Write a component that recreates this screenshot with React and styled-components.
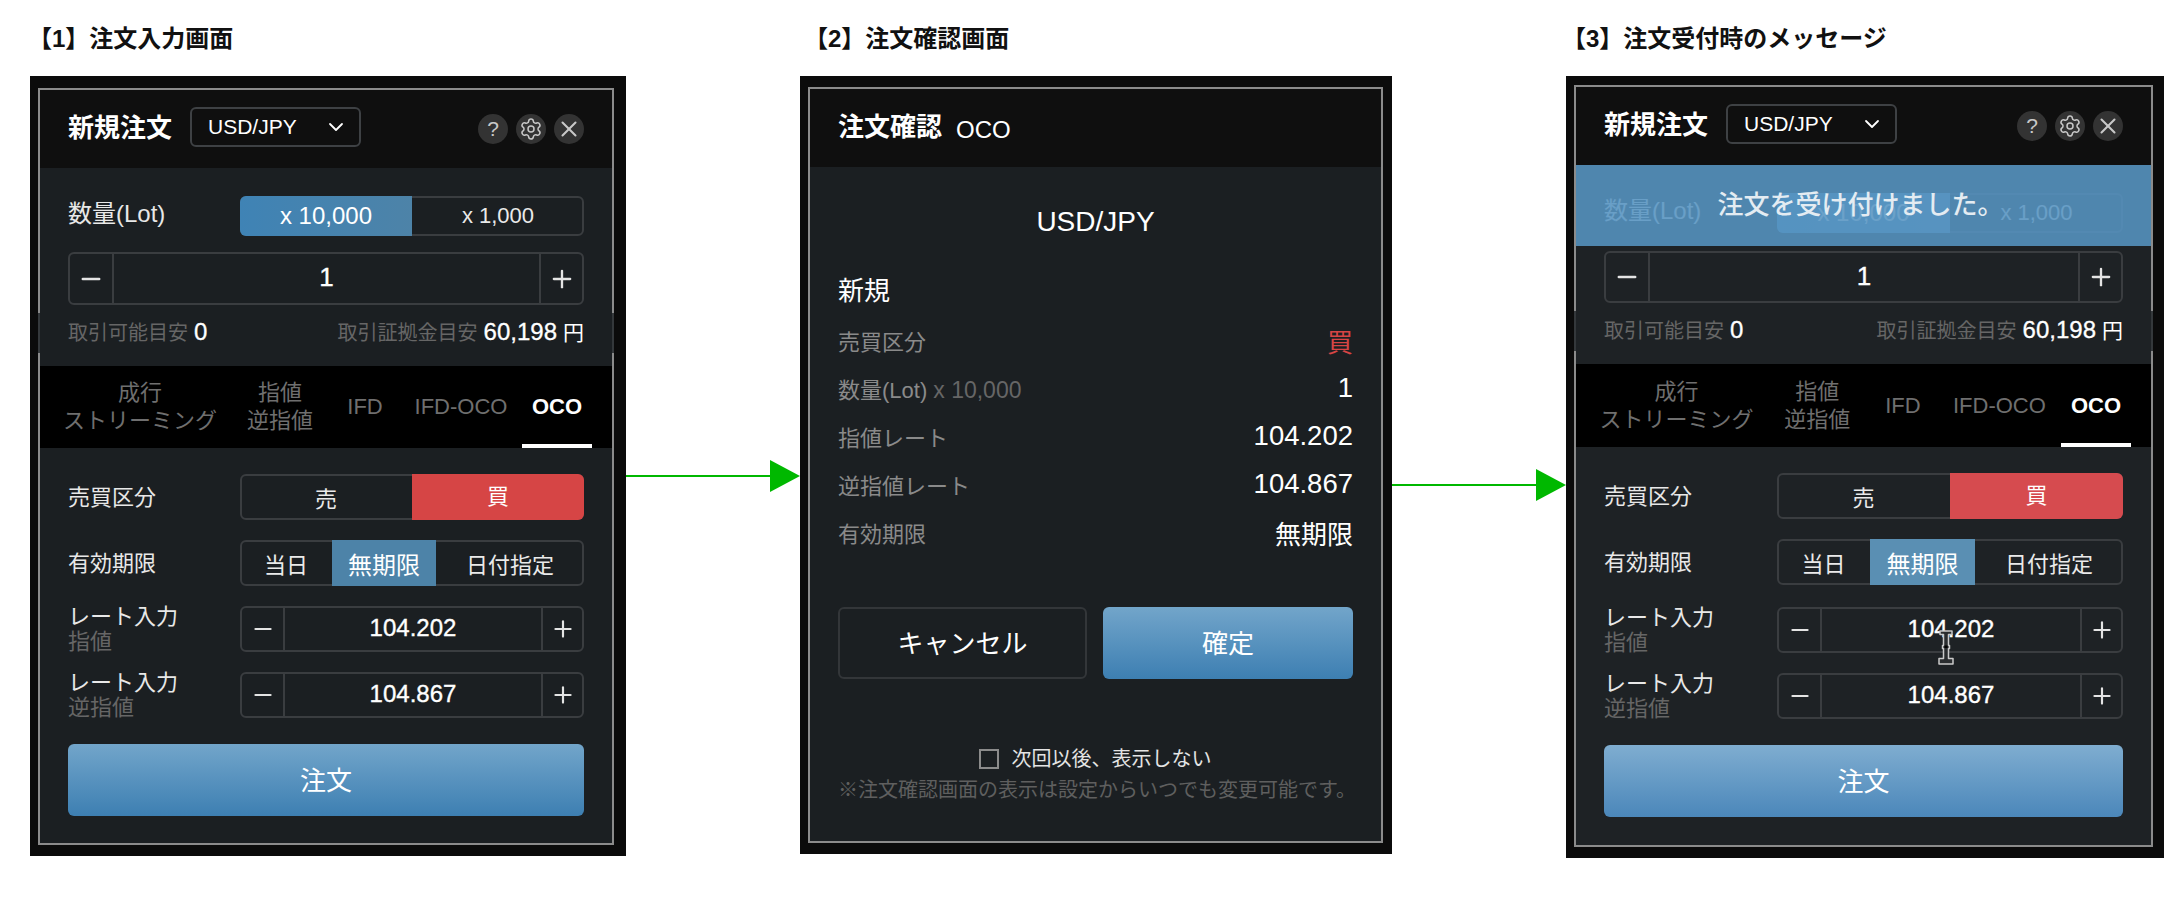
import React from "react";
import styled, { createGlobalStyle, ThemeProvider } from "styled-components";
import { ChevronDown, Minus, Plus, Settings, X } from "lucide-react";

const SANS = `"Liberation Sans", "Noto Sans CJK JP", sans-serif`;

const normal = {
  panel: "#1b1f22", red: "#d64545", blue: "#4d83a8", blueLeft: "#3f83b5",
  btnTop: "#72a5ca", btnBottom: "#3d7fb2", stepGap: 16, stepH: 53, tabsH: 82, rateShift: 0,
  labelW: 172, expiryCols: "90px 104px 1fr", tabScale: 1,
};
const afterOrder = {
  panel: "#1e2225", red: "#d64b4f", blue: "#5a8fb3", blueLeft: "#4d8ab8",
  btnTop: "#7fadd0", btnBottom: "#4b87ba", stepGap: 18, stepH: 52, tabsH: 83, rateShift: 2,
  labelW: 173, expiryCols: "91px 105px 1fr", tabScale: 1.006,
};

const GlobalStyle = createGlobalStyle`
  html, body { margin: 0; padding: 0; background: #fff; }
  body { font-family: ${SANS}; color: #fff; }
  * { box-sizing: border-box; }
`;

const Page = styled.div`
  display: flex;
  align-items: flex-start;
  width: 2184px;
  height: 913px;
  padding-left: 30px;
  overflow: hidden;
`;

const Column = styled.section`
  flex: 0 0 ${(p) => p.$w}px;
  min-width: 0;
`;

const Heading = styled.h2`
  height: 76px;
  margin: 0 0 0 ${(p) => p.$shift}px;
  padding-top: 24px;
  font-size: 24px;
  line-height: 30px;
  font-weight: 700;
  color: #111;
  white-space: nowrap;
`;

const ArrowSlot = styled.svg`
  flex: 0 0 174px;
  margin-top: ${(p) => p.$top}px;
  display: block;
`;

const Frame = styled.div`
  position: relative;
  height: ${(p) => p.$h}px;
  padding: ${(p) => p.$inset};
  background: #0b0b0b;
`;

const Inner = styled.div`
  height: 100%;
  border: 2px solid #8b8b8b;
  background: ${(p) => p.theme.panel};
  display: flex;
  flex-direction: column;
`;

const Header = styled.header`
  flex: 0 0 78px;
  display: flex;
  align-items: center;
  padding: 0 28px;
  background: #0f0f0f;
`;

const Title = styled.h1`
  margin: 0 18px 2px 0;
  font-size: 26px;
  line-height: 34px;
  font-weight: 700;
`;

const Kind = styled.span`
  margin-left: -4px;
  padding-top: 3px;
  font-size: 24px;
`;

const PairSelect = styled.div`
  width: 171px;
  height: 40px;
  margin-bottom: 4px;
  padding: 0 11px 0 16px;
  display: flex;
  align-items: center;
  justify-content: space-between;
  border: 2px solid #3e4144;
  border-radius: 6px;
  font-size: 21px;
`;

const HeadIcons = styled.div`
  margin-left: auto;
  display: flex;
  gap: 8px;
`;

const RoundIcon = styled.span`
  width: 30px;
  height: 30px;
  border-radius: 50%;
  display: flex;
  align-items: center;
  justify-content: center;
  background: #333;
  color: #c8c8c8;
  font-size: 21px;
`;

const QtySection = styled.div`
  position: relative;
  padding: 28px 28px 13px;
`;

const Row = styled.div`
  display: flex;
  align-items: center;
`;

const Label = styled.div`
  flex: 0 0 ${(p) => p.theme.labelW}px;
  font-size: 22px;
  line-height: 25px;
  color: #e8e8e8;
`;

const QtyLabel = styled(Label)`
  font-size: 24px;
  padding-bottom: 6px;
`;

const SubLabel = styled.div`
  color: #666;
`;

const Segmented = styled.div`
  flex: 1;
  height: ${(p) => p.$h}px;
  display: grid;
  grid-template-columns: ${(p) => p.$cols};
  border: 2px solid #3a3d40;
  border-radius: 6px;
`;

const ExpiryGrid = styled(Segmented)`
  grid-template-columns: ${(p) => p.theme.expiryCols};
`;

const Seg = styled.div`
  margin: -2px 0;
  padding-bottom: ${(p) => (p.$tone === "red" ? 6 : 0)}px;
  display: flex;
  align-items: center;
  justify-content: center;
  font-size: ${(p) => (p.$tone === "left" || p.$tone === "blue" ? 24 : 22)}px;
  color: ${(p) => (p.$tone ? "#fff" : "#eaeaea")};
  background: ${(p) =>
    p.$tone === "red" ? p.theme.red
    : p.$tone === "blue" ? p.theme.blue
    : p.$tone === "left" ? `linear-gradient(90deg, ${p.theme.blueLeft}, ${p.theme.blue})`
    : "transparent"};
  &:first-child { margin-left: -2px; border-radius: 6px 0 0 6px; }
  &:last-child { margin-right: -2px; border-radius: 0 6px 6px 0; }
`;

const Stepper = styled.div`
  flex: 1;
  height: 46px;
  display: grid;
  grid-template-columns: ${(p) => p.$left}px 1fr ${(p) => p.$right}px;
  border: 2px solid #3a3d40;
  border-radius: 6px;
`;

const QtyStepper = styled(Stepper)`
  height: ${(p) => p.theme.stepH}px;
`;

const StepBtn = styled.span`
  display: flex;
  align-items: center;
  justify-content: center;
  color: #e4e4e4;
`;

const StepValue = styled.span`
  display: flex;
  align-items: center;
  justify-content: center;
  padding-bottom: 2px;
  font-size: ${(p) => p.$size}px;
  -webkit-text-stroke: 0.35px #fff;
  border-left: 2px solid #3a3d40;
  border-right: 2px solid #3a3d40;
`;

const QtyStepRow = styled(Row)`
  margin-top: ${(p) => p.theme.stepGap}px;
`;

const InfoRow = styled.div`
  height: 40px;
  margin: 8px -30px 0;
  padding: 0 28px 4px;
  display: flex;
  align-items: center;
  justify-content: space-between;
  font-size: 20px;
  color: #666;
  background: ${(p) => p.theme.panel};
  border-left: 2px solid #34383b;
  border-right: 2px solid #34383b;
`;

const InfoValue = styled.span`
  margin-left: 6px;
  color: #fff;
  font-size: 24px;
  -webkit-text-stroke: 0.3px #fff;
`;

const InfoUnit = styled.span`
  margin-left: 6px;
  color: #fff;
  font-size: 21px;
`;

const Tabs = styled.nav`
  flex: 0 0 ${(p) => p.theme.tabsH}px;
  display: flex;
  padding-left: 10px;
  background: #000;
`;

const Tab = styled.div`
  flex: 0 0 ${(p) => p.$w * p.theme.tabScale}px;
  display: flex;
  align-items: center;
  justify-content: center;
  text-align: center;
  font-size: 22px;
  line-height: 28px;
  white-space: pre-line;
  color: ${(p) => (p.$active ? "#fff" : "#6f6f6f")};
  font-weight: ${(p) => (p.$active ? 700 : 400)};
  box-shadow: ${(p) => (p.$active ? "inset 0 -4px 0 #fff" : "none")};
`;

const FormSection = styled.div`
  padding: 26px 28px 0;
  display: flex;
  flex-direction: column;
  gap: 20px;
`;

const RateRow = styled(Row)`
  height: 46px;
  margin-top: ${(p) => (p.$first ? p.theme.rateShift : 0)}px;
`;

const OrderButton = styled.div`
  height: 72px;
  margin-top: 6px;
  padding-bottom: 3px;
  display: flex;
  align-items: center;
  justify-content: center;
  border-radius: 6px;
  font-size: 26px;
  color: #fff;
  background: linear-gradient(180deg, ${(p) => p.theme.btnTop}, ${(p) => p.theme.btnBottom});
`;

const Banner = styled.div`
  position: absolute;
  top: 0;
  left: 0;
  right: 0;
  height: 81px;
  padding: 0 6px 7px 0;
  display: flex;
  align-items: center;
  justify-content: center;
  font-size: 26px;
  font-weight: 500;
  color: #e4ecf2;
  background: rgba(87, 148, 193, 0.88);
`;

const CursorMark = styled.svg`
  position: absolute;
  left: 371px;
  top: 554px;
`;

const ConfirmBody = styled.div`
  padding: 39px 28px 0;
`;

const PairTitle = styled.div`
  text-align: center;
  font-size: 28px;
  line-height: 32px;
`;

const SectionName = styled.div`
  margin: 37px 0 9px;
  font-size: 26px;
  line-height: 32px;
`;

const ConfirmRow = styled.div`
  height: 48px;
  display: flex;
  align-items: center;
  justify-content: space-between;
  font-size: 22px;
  color: #8a8a8a;
`;

const Unit = styled.span`
  margin-left: 6px;
  color: #666;
  font-size: 23px;
`;

const ConfirmValue = styled.span`
  color: ${(p) => (p.$red ? "#d64545" : "#fff")};
  font-size: ${(p) => p.$size || 27.5}px;
`;

const ButtonRow = styled.div`
  margin-top: 51px;
  display: grid;
  grid-template-columns: 249px 250px;
  justify-content: space-between;
`;

const CancelButton = styled(OrderButton)`
  margin-top: 0;
  background: transparent;
  border: 2px solid #333639;
`;

const ConfirmButton = styled(OrderButton)`
  margin-top: 0;
`;

const SkipRow = styled.div`
  margin-top: 67px;
  display: flex;
  align-items: center;
  justify-content: center;
  gap: 13px;
  font-size: 20px;
  line-height: 26px;
  color: #e4e4e4;
  padding-right: 1px;
`;

const CheckBox = styled.span`
  width: 20px;
  height: 20px;
  border: 2px solid #8b8b8b;
`;

const Note = styled.div`
  margin-top: 5px;
  font-size: 20px;
  line-height: 26px;
  color: #5f5f5f;
  white-space: nowrap;
`;

const Arrow = ({ top }) => (
  <ArrowSlot $top={top} width="174" height="32" viewBox="0 0 174 32">
    <rect x="0" y="15" width="146" height="2" fill="#00b800" />
    <polygon points="144,0 174,16 144,32" fill="#00b800" />
  </ArrowSlot>
);

const PanelHead = () => (
  <Header>
    <Title>新規注文</Title>
    <PairSelect>
      USD/JPY
      <ChevronDown size={24} strokeWidth={1.8} />
    </PairSelect>
    <HeadIcons>
      <RoundIcon>?</RoundIcon>
      <RoundIcon><Settings size={24} strokeWidth={1.5} /></RoundIcon>
      <RoundIcon><X size={26} strokeWidth={1.9} /></RoundIcon>
    </HeadIcons>
  </Header>
);

const RateStepper = ({ value }) => (
  <Stepper $left={41} $right={39}>
    <StepBtn><Minus size={26} strokeWidth={2} /></StepBtn>
    <StepValue $size={24}>{value}</StepValue>
    <StepBtn><Plus size={26} strokeWidth={2} /></StepBtn>
  </Stepper>
);

const OrderPanel = ({ banner, height, inset, cursor }) => (
  <Frame $h={height} $inset={inset}>
    <Inner>
      <PanelHead />
      <QtySection>
        <Row>
          <QtyLabel>数量(Lot)</QtyLabel>
          <Segmented $h={40} $cols="1fr 1fr">
            <Seg $tone="left">x 10,000</Seg>
            <Seg>x 1,000</Seg>
          </Segmented>
        </Row>
        <QtyStepRow>
          <QtyStepper $left={42} $right={41}>
            <StepBtn><Minus size={28} strokeWidth={2.2} /></StepBtn>
            <StepValue $size={26}>1</StepValue>
            <StepBtn><Plus size={28} strokeWidth={2} /></StepBtn>
          </QtyStepper>
        </QtyStepRow>
        <InfoRow>
          <span>取引可能目安<InfoValue>0</InfoValue></span>
          <span>取引証拠金目安<InfoValue>60,198</InfoValue><InfoUnit>円</InfoUnit></span>
        </InfoRow>
        {banner && <Banner>注文を受け付けました。</Banner>}
      </QtySection>
      <Tabs>
        <Tab $w={180}>{"成行\nストリーミング"}</Tab>
        <Tab $w={100}>{"指値\n逆指値"}</Tab>
        <Tab $w={70}>IFD</Tab>
        <Tab $w={122}>IFD-OCO</Tab>
        <Tab $w={70} $active>OCO</Tab>
      </Tabs>
      <FormSection>
        <Row>
          <Label>売買区分</Label>
          <Segmented $h={46} $cols="1fr 1fr">
            <Seg>売</Seg>
            <Seg $tone="red">買</Seg>
          </Segmented>
        </Row>
        <Row>
          <Label>有効期限</Label>
          <ExpiryGrid $h={46}>
            <Seg>当日</Seg>
            <Seg $tone="blue">無期限</Seg>
            <Seg>日付指定</Seg>
          </ExpiryGrid>
        </Row>
        <RateRow $first>
          <Label>レート入力<SubLabel>指値</SubLabel></Label>
          <RateStepper value="104.202" />
        </RateRow>
        <RateRow>
          <Label>レート入力<SubLabel>逆指値</SubLabel></Label>
          <RateStepper value="104.867" />
        </RateRow>
        <OrderButton>注文</OrderButton>
      </FormSection>
    </Inner>
    {cursor && (
      <CursorMark width="18" height="36" viewBox="0 0 18 36">
        <path d="M3 1h12v3.5h-3.5v11h1v3h-1v10h4.500v5.500h-14v-5.500h4.500v-10h-1v-3h1v-11h-3.500z" fill="#2a2d2f" stroke="#c9c9c9" strokeWidth="1.500" strokeLinejoin="round" />
        <rect x="7.500" y="15.500" width="3" height="2.500" fill="#000" />
      </CursorMark>
    )}
  </Frame>
);

const ConfirmPanel = () => (
  <Frame $h={778} $inset="11px 9px 11px 8px">
    <Inner>
      <Header>
        <Title>注文確認</Title>
        <Kind>OCO</Kind>
      </Header>
      <ConfirmBody>
        <PairTitle>USD/JPY</PairTitle>
        <SectionName>新規</SectionName>
        <ConfirmRow>売買区分<ConfirmValue $red $size={26}>買</ConfirmValue></ConfirmRow>
        <ConfirmRow><span>数量(Lot)<Unit>x 10,000</Unit></span><ConfirmValue>1</ConfirmValue></ConfirmRow>
        <ConfirmRow>指値レート<ConfirmValue>104.202</ConfirmValue></ConfirmRow>
        <ConfirmRow>逆指値レート<ConfirmValue>104.867</ConfirmValue></ConfirmRow>
        <ConfirmRow>有効期限<ConfirmValue $size={26}>無期限</ConfirmValue></ConfirmRow>
        <ButtonRow>
          <CancelButton>キャンセル</CancelButton>
          <ConfirmButton>確定</ConfirmButton>
        </ButtonRow>
        <SkipRow><CheckBox />次回以後、表示しない</SkipRow>
        <Note>※注文確認画面の表示は設定からいつでも変更可能です。</Note>
      </ConfirmBody>
    </Inner>
  </Frame>
);

export default function App() {
  return (
    <ThemeProvider theme={normal}>
      <GlobalStyle />
      <Page>
        <Column $w={596}>
          <Heading $shift={-2}>【1】注文入力画面</Heading>
          <OrderPanel height={780} inset="12px 12px 11px 8px" />
        </Column>
        <Arrow top={460} />
        <Column $w={592}>
          <Heading $shift={4}>【2】注文確認画面</Heading>
          <ConfirmPanel />
        </Column>
        <Arrow top={469} />
        <Column $w={598}>
          <ThemeProvider theme={afterOrder}>
            <Heading $shift={-4}>【3】注文受付時のメッセージ</Heading>
            <OrderPanel banner cursor height={782} inset="9px 11px 11px 8px" />
          </ThemeProvider>
        </Column>
      </Page>
    </ThemeProvider>
  );
}
